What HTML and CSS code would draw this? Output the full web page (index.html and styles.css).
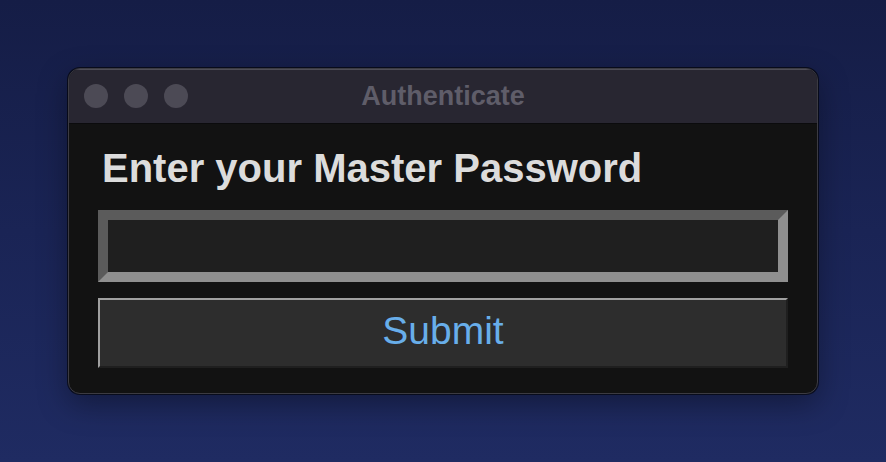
FILE: index.html
```html
<!DOCTYPE html>
<html lang="en">
<head>
<meta charset="utf-8">
<title>Authenticate</title>
<link rel="stylesheet" href="styles.css">
</head>
<body>
<div class="window">
  <div class="titlebar">
    <div class="lights">
      <span class="light"></span>
      <span class="light"></span>
      <span class="light"></span>
    </div>
    <div class="title">Authenticate</div>
    <div></div>
  </div>
  <div class="content">
    <h1 class="heading">Enter your Master Password</h1>
    <input class="password" type="password" aria-label="Master Password">
    <button class="submit" type="button">Submit</button>
  </div>
</div>
</body>
</html>
```
FILE: styles.css
```css
html, body {
  margin: 0;
  padding: 0;
  height: 100%;
}
body {
  background: linear-gradient(180deg, #151d46 0%, #1a2455 50%, #1f2b62 100%);
  display: flex;
  align-items: center;
  justify-content: center;
  font-family: "Liberation Sans", Arial, sans-serif;
}
.window {
  width: 748px;
  border: 1px solid #3c3b42;
  border-radius: 12px;
  overflow: hidden;
  background: #121212;
  box-shadow: 0 0 0 1px rgba(0,0,0,0.6), 0 10px 30px rgba(0,0,0,0.35);
}
.titlebar {
  height: 54px;
  background: #282631;
  border-bottom: 1px solid #0b0b0d;
  display: grid;
  grid-template-columns: 1fr auto 1fr;
  align-items: center;
  box-shadow: inset 0 1px 0 rgba(255,255,255,0.18);
}
.lights {
  display: flex;
  gap: 16px;
  padding-left: 15px;
}
.light {
  width: 24px;
  height: 24px;
  border-radius: 50%;
  background: #4c4a55;
}
.title {
  font-size: 27px;
  font-weight: bold;
  color: #5f5d69;
  line-height: 30px;
  padding-bottom: 1px;
}
.content {
  padding: 22px 29px 25px 29px;
  display: flex;
  flex-direction: column;
}
.heading {
  margin: 0 0 20px 4px;
  font-size: 40px;
  line-height: 44px;
  font-weight: bold;
  color: #dcdcdc;
}
.password {
  box-sizing: border-box;
  width: 690px;
  height: 72px;
  margin: 0 0 16px 0;
  padding: 0 8px;
  background: #1f1f1f;
  border-width: 10px;
  border-style: solid;
  border-color: #5b5b5b #8f8f8f #8f8f8f #5b5b5b;
  outline: none;
  color: #dcdcdc;
  font-size: 24px;
}
.submit {
  box-sizing: border-box;
  width: 690px;
  height: 70px;
  margin: 0;
  padding: 0 0 5px 0;
  background: #2d2d2d;
  border-width: 2px;
  border-style: solid;
  border-color: #a0a0a0 #1f1f1f #1f1f1f #a0a0a0;
  color: #68aeea;
  font-family: "Liberation Sans", Arial, sans-serif;
  font-size: 39px;
  line-height: 40px;
}
```
